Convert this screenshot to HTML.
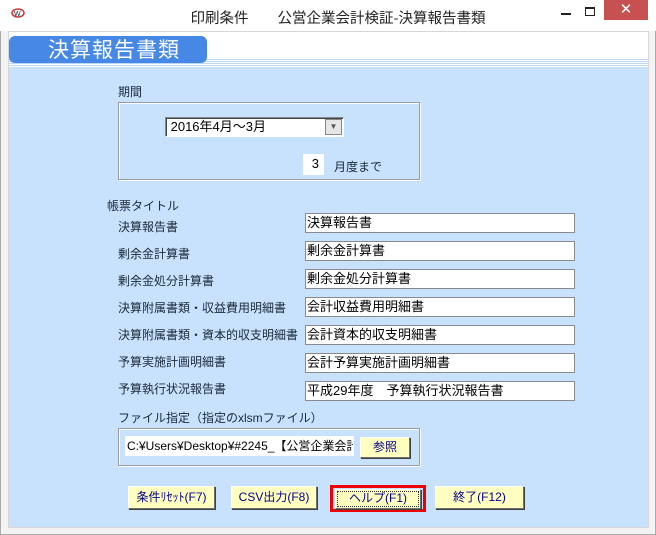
<!DOCTYPE html><html><head><meta charset="utf-8"><style>
*{margin:0;padding:0;box-sizing:border-box}
body{width:656px;height:535px;background:#f0f0f0;position:relative;overflow:hidden;font-family:"Liberation Sans","Noto Sans CJK JP","WenQuanYi Zen Hei",sans-serif;font-size:13px;color:#1a2a3a}
.a{position:absolute}
.win{left:0;top:0;width:656px;height:535px;border:1px solid #ababab;background:#f3f3f3}
.title{left:0;top:0;width:656px;height:31px;background:#fff}
.tt{top:7px;left:10px;width:656px;text-align:center;font-size:14.5px;color:#222;font-family:"Noto Sans CJK JP",sans-serif}
.client{left:8px;top:31px;width:641px;height:497px;background:#c8e1fc;border:1px solid #d6d6d6}
.hdr{left:9px;top:32px;width:639px;height:27px;background:#fff}
.tab{left:9px;top:36px;width:198px;height:27px;background:#4788e6;border-radius:6px;color:#fff;font-size:21px;line-height:27px;padding-left:39px;letter-spacing:1px;font-family:"Noto Sans CJK JP",sans-serif}
.grp{border:1px solid #9a9aa8;box-shadow:inset 1px 1px 0 #fff,1px 1px 0 #fff}
.inp{background:#fff;border:1px solid #8a8a8a;height:20px;line-height:18px;padding-left:1px;color:#000;font-size:13px}
.lb{font-size:12px;line-height:20px}
.btn{background:#ffffc0;border:1px solid #fff;border-right-color:#707070;border-bottom-color:#707070;box-shadow:1px 1px 0 #404040;height:23px;line-height:21px;text-align:center;color:#00008a;font-size:12px}
</style></head><body>
<div class="a win"></div>
<div class="a title"></div>
<svg class="a" style="left:11px;top:8px" width="14" height="10"><ellipse cx="7" cy="5" rx="6" ry="4" fill="none" stroke="#c33" stroke-width="1.5"/><text x="3" y="8" font-size="7" fill="#223">W</text></svg>
<div class="a tt">印刷条件　　公営企業会計検証-決算報告書類</div>
<div class="a" style="left:561px;top:13px;width:10px;height:2px;background:#222"></div>
<div class="a" style="left:585px;top:7px;width:10px;height:9px;border:1px solid #222;border-top-width:2px"></div>
<div class="a" style="left:604px;top:0;width:44px;height:20px;background:#c75050;color:#fff;text-align:center;font-size:15px;line-height:20px">✕</div>
<div class="a client"></div>
<div class="a hdr"></div>
<div class="a" style="left:9px;top:59px;width:639px;height:8px;background:repeating-linear-gradient(#bcd8f6 0 1px,#fff 1px 2px)"></div>
<div class="a tab">決算報告書類</div>

<div class="a lb" style="left:118px;top:82px">期間</div>
<div class="a grp" style="left:118px;top:102px;width:302px;height:78px"></div>
<div class="a inp" style="left:165px;top:117px;width:179px;border-color:#888 #fff #fff #888;box-shadow:inset 1px 1px 0 #444">&nbsp;2016年4月～3月</div>
<div class="a" style="left:325px;top:119px;width:17px;height:16px;background:#e6e6e6;border:1px solid #888;text-align:center;font-size:8px;line-height:14px;color:#555">▼</div>
<div class="a inp" style="left:303px;top:154px;width:21px;height:21px;border-color:#fff;text-align:right;padding-right:4px">3</div>
<div class="a lb" style="left:334px;top:157px">月度まで</div>

<div class="a lb" style="left:107px;top:196px">帳票タイトル</div>
<div class="a lb" style="left:118px;top:217px">決算報告書</div>
<div class="a lb" style="left:118px;top:244px">剰余金計算書</div>
<div class="a lb" style="left:118px;top:271px">剰余金処分計算書</div>
<div class="a lb" style="left:118px;top:298px">決算附属書類・収益費用明細書</div>
<div class="a lb" style="left:118px;top:325px">決算附属書類・資本的収支明細書</div>
<div class="a lb" style="left:118px;top:352px">予算実施計画明細書</div>
<div class="a lb" style="left:118px;top:379px">予算執行状況報告書</div>
<div class="a inp" style="left:305px;top:213px;width:270px">決算報告書</div>
<div class="a inp" style="left:305px;top:241px;width:270px">剰余金計算書</div>
<div class="a inp" style="left:305px;top:269px;width:270px">剰余金処分計算書</div>
<div class="a inp" style="left:305px;top:297px;width:270px">会計収益費用明細書</div>
<div class="a inp" style="left:305px;top:325px;width:270px">会計資本的収支明細書</div>
<div class="a inp" style="left:305px;top:353px;width:270px">会計予算実施計画明細書</div>
<div class="a inp" style="left:305px;top:381px;width:270px">平成29年度　予算執行状況報告書</div>

<div class="a lb" style="left:118px;top:408px">ファイル指定（指定のxlsmファイル）</div>
<div class="a grp" style="left:118px;top:428px;width:302px;height:38px"></div>
<div class="a inp" style="left:125px;top:436px;width:229px;border-color:#fff;white-space:nowrap;overflow:hidden;font-size:12px">C:¥Users¥Desktop¥#2245_【公営企業会計】</div>
<div class="a btn" style="left:360px;top:437px;width:50px;height:21px;line-height:19px">参照</div>

<div class="a btn" style="left:128px;top:486px;width:87px">条件ﾘｾｯﾄ(F7)</div>
<div class="a btn" style="left:231px;top:486px;width:86px">CSV出力(F8)</div>
<div class="a" style="left:330px;top:485px;width:96px;height:27px;border:3px solid #e00"></div>
<div class="a btn" style="left:335px;top:489px;width:86px;height:20px;line-height:17px;outline:1px dotted #333;outline-offset:-3px">ヘルプ(F1)</div>
<div class="a btn" style="left:435px;top:486px;width:89px">終了(F12)</div>
</body></html>
